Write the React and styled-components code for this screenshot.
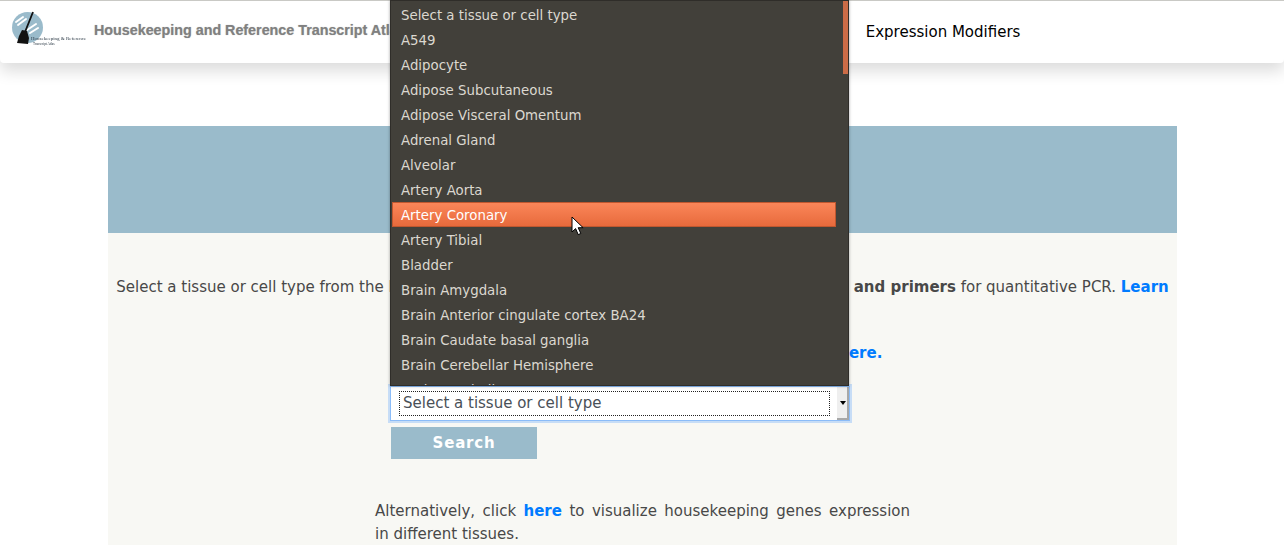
import React from "react";
import styled, { createGlobalStyle } from "styled-components";

const GlobalStyle = createGlobalStyle`
  html, body {
    margin: 0;
    padding: 0;
    height: 550px;
    overflow: hidden;
    background: #fff;
    font-family: "DejaVu Sans", sans-serif;
  }
`;

const Navbar = styled.nav`
  display: flex;
  align-items: center;
  box-sizing: border-box;
  height: 63px;
  padding-bottom: 2px;
  background: #fff;
  border-top: 1px solid #c9c9c5;
  box-shadow: 0 8px 16px rgba(0, 0, 0, 0.14);
  border-radius: 0 0 4px 4px;
`;

const Logo = styled.svg`
  display: block;
  width: 94px;
  height: 60px;
  flex: none;
  filter: blur(0.3px);
`;

const Title = styled.span`
  padding-bottom: 2px;
  font-family: "Liberation Sans", Arial, sans-serif;
  font-weight: 700;
  font-size: 14.3px;
  color: #808080;
  white-space: nowrap;
  text-shadow: 0 0 1px rgba(128, 128, 128, 0.6);
`;

const NavLink = styled.a`
  margin-left: 460px;
  padding-top: 2px;
  font-size: 15px;
  color: #000;
`;

const Main = styled.main`
  width: 1069px;
  height: 419px;
  margin: 63px 0 0 108px;
  background: #f8f8f4;
`;

const Banner = styled.div`
  height: 107px;
  background: #9abbcb;
`;

const Intro = styled.p`
  margin: 42px 0 0;
  font-size: 15px;
  line-height: 24px;
  color: #484848;
  text-align: center;
  white-space: nowrap;
`;

const Hint = styled(Intro)`
  margin-top: 18px;
`;

const Link = styled.a`
  color: #007bff;
  font-weight: 700;
`;

const Form = styled.form`
  width: 460px;
  margin: 21px 0 0 282px;
`;

const SelectWrap = styled.div`
  position: relative;
`;

const SelectBox = styled.div`
  display: flex;
  height: 33px;
  border: 1px solid #8bbcf8;
  box-shadow: 0 0 0 2px rgba(139, 188, 248, 0.45);
  background: #fff;
`;

const SelectLabel = styled.div`
  flex: 1;
  height: 23px;
  margin: 4px 7px 0 8px;
  padding-left: 3px;
  border: 1px dotted #222;
  font-size: 15px;
  line-height: 23px;
  color: #495057;
`;

const SelectArrow = styled.div`
  display: flex;
  align-items: center;
  justify-content: center;
  width: 9px;
  padding-left: 1px;
  background: #efefef;
  border-right: 2px solid #a8a8a8;
  border-bottom: 2px solid #a8a8a8;

  &::after {
    content: "";
    border: 3px solid transparent;
    border-top: 4px solid #000;
    border-bottom: 0;
  }
`;

const Popup = styled.div`
  position: absolute;
  z-index: 1;
  left: 0;
  bottom: 100%;
  display: flex;
  width: 459px;
  height: 386px;
  box-sizing: border-box;
  overflow: hidden;
  background: #42403a;
  border: 1px solid #2f2d29;
  box-shadow: 0 0 3px rgba(0, 0, 0, 0.35);
`;

const OptionList = styled.ul`
  flex: 1;
  min-width: 0;
  list-style: none;
  margin: 0;
  padding: 1px 0 0 1px;
`;

const Option = styled.li`
  box-sizing: border-box;
  height: 25px;
  padding: 1px 0 0 ${(props) => (props.$active ? "8px" : "9px")};
  font-size: 13.33px;
  line-height: ${(props) => (props.$active ? "23px" : "25px")};
  white-space: nowrap;
  color: ${(props) => (props.$active ? "#fff" : "#dcd8d0")};
  background: ${(props) =>
    props.$active
      ? "linear-gradient(to bottom, #fb8659, #e76a3c)"
      : "transparent"};
  border: ${(props) => (props.$active ? "1px solid #c0572f" : "0")};
`;

const ScrollTrack = styled.div`
  flex: none;
  width: 12px;
  display: flex;
  justify-content: flex-end;
`;

const ScrollThumb = styled.div`
  width: 5px;
  height: 73px;
  background: #cc6c47;
`;

const Cursor = styled.svg`
  position: absolute;
  left: 180px;
  top: 215px;
  width: 13px;
  height: 20px;
`;

const SearchButton = styled.button`
  display: block;
  width: 146px;
  height: 32px;
  margin: 6px 0 0 1px;
  padding: 0;
  border: 0;
  background: #9abbcb;
  color: #fff;
  font-family: "DejaVu Sans", sans-serif;
  font-size: 15px;
  font-weight: 700;
  letter-spacing: 0.8px;
`;

const Alternative = styled.p`
  width: 535px;
  margin: 41px auto 0;
  font-size: 15px;
  line-height: 23px;
  color: #484848;
  text-align: justify;
`;

const tissues = [
  "Select a tissue or cell type",
  "A549",
  "Adipocyte",
  "Adipose Subcutaneous",
  "Adipose Visceral Omentum",
  "Adrenal Gland",
  "Alveolar",
  "Artery Aorta",
  "Artery Coronary",
  "Artery Tibial",
  "Bladder",
  "Brain Amygdala",
  "Brain Anterior cingulate cortex BA24",
  "Brain Caudate basal ganglia",
  "Brain Cerebellar Hemisphere",
  "Brain Cerebellum",
];

const App = () => {
  return (
    <>
      <GlobalStyle />
      <Navbar>
        <Logo viewBox="0 0 94 60">
          <circle cx="27.5" cy="26.5" r="15.5" fill="#9abbcb" />
          <path
            d="M16 21l7-5M18 24l8-6M30 32l8-5M27 29l9-6"
            stroke="#fff"
            strokeWidth="2"
            strokeLinecap="round"
          />
          <path d="M33 11L25 31" stroke="#111" strokeWidth="1.8" />
          <path d="M22 29l5 1 2 7-1 6-11-1 2-7z" fill="#111" />
          <text x="31" y="39" fontFamily="Liberation Serif, serif" fontSize="5" fill="#2c3a46">
            Housekeeping &amp; Reference
          </text>
          <text x="33" y="44" fontFamily="Liberation Serif, serif" fontSize="3.4" fill="#2c3a46">
            Transcript Atlas
          </text>
        </Logo>
        <Title>Housekeeping and Reference Transcript Atlas</Title>
        <NavLink>Expression Modifiers</NavLink>
      </Navbar>
      <Main>
        <Banner />
        <Intro>
          Select a tissue or cell type from the list below, to retrieve the most stable{" "}
          <b>housekeeping genes and primers</b> for quantitative PCR. <Link>Learn</Link>
          <br />
          <Link>more.</Link>
        </Intro>
        <Hint>
          To browse each transcript in the atlas, just follow this link <Link>here.</Link>
        </Hint>
        <Form>
          <SelectWrap>
            <Popup>
              <OptionList>
                {tissues.map((name) => (
                  <Option key={name} $active={name === "Artery Coronary"}>
                    {name}
                  </Option>
                ))}
              </OptionList>
              <ScrollTrack>
                <ScrollThumb />
              </ScrollTrack>
              <Cursor viewBox="0 0 13 20">
                <path
                  d="M1 1v15l3.6-3.4 2.6 6 2.6-1.1-2.6-5.8h4.9z"
                  fill="#fff"
                  stroke="#000"
                  strokeWidth="1"
                />
              </Cursor>
            </Popup>
            <SelectBox>
              <SelectLabel>Select a tissue or cell type</SelectLabel>
              <SelectArrow />
            </SelectBox>
          </SelectWrap>
          <SearchButton type="button">Search</SearchButton>
        </Form>
        <Alternative>
          Alternatively, click <Link>here</Link> to visualize housekeeping genes expression
          in&nbsp;different tissues.
        </Alternative>
      </Main>
    </>
  );
};

export default App;
